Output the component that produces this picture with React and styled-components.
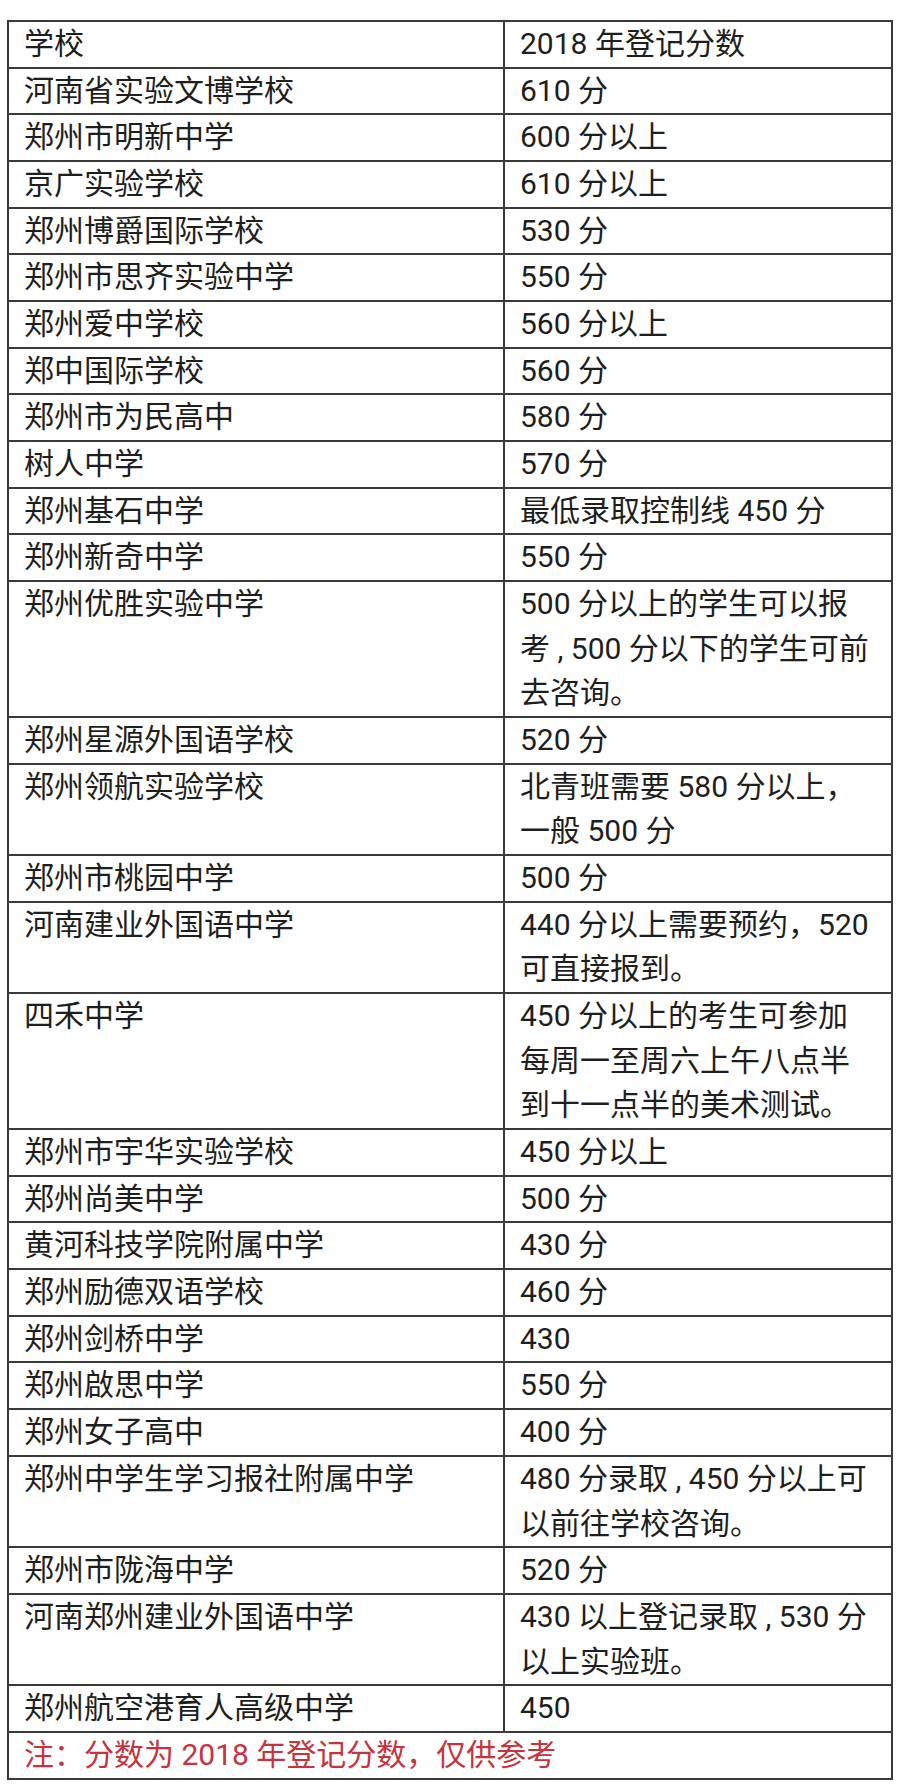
import React from 'react';
import styled, { createGlobalStyle } from 'styled-components';

const GlobalStyle = createGlobalStyle`
  body {
    margin: 0;
    background: #fff;
  }
`;

const rows = [
  ['河南省实验文博学校', ['610 分']],
  ['郑州市明新中学', ['600 分以上']],
  ['京广实验学校', ['610 分以上']],
  ['郑州博爵国际学校', ['530 分']],
  ['郑州市思齐实验中学', ['550 分']],
  ['郑州爱中学校', ['560 分以上']],
  ['郑中国际学校', ['560 分']],
  ['郑州市为民高中', ['580 分']],
  ['树人中学', ['570 分']],
  ['郑州基石中学', ['最低录取控制线 450 分']],
  ['郑州新奇中学', ['550 分']],
  ['郑州优胜实验中学', ['500 分以上的学生可以报', '考 , 500 分以下的学生可前', '去咨询。']],
  ['郑州星源外国语学校', ['520 分']],
  ['郑州领航实验学校', ['北青班需要 580 分以上，', '一般 500 分']],
  ['郑州市桃园中学', ['500 分']],
  ['河南建业外国语中学', ['440 分以上需要预约，520', '可直接报到。']],
  ['四禾中学', ['450 分以上的考生可参加', '每周一至周六上午八点半', '到十一点半的美术测试。']],
  ['郑州市宇华实验学校', ['450 分以上']],
  ['郑州尚美中学', ['500 分']],
  ['黄河科技学院附属中学', ['430 分']],
  ['郑州励德双语学校', ['460 分']],
  ['郑州剑桥中学', ['430']],
  ['郑州啟思中学', ['550 分']],
  ['郑州女子高中', ['400 分']],
  ['郑州中学生学习报社附属中学', ['480 分录取 , 450 分以上可', '以前往学校咨询。']],
  ['郑州市陇海中学', ['520 分']],
  ['河南郑州建业外国语中学', ['430 以上登记录取 , 530 分', '以上实验班。']],
  ['郑州航空港育人高级中学', ['450']],
];

const Table = styled.div`
  box-sizing: border-box;
  width: 886px;
  margin: 20px 0 8px 7px;
  border: 2px solid #3a3a3a;
  border-bottom: none;
  font-family: Roboto, "Noto Sans CJK SC", sans-serif;
  font-size: 30px;
  color: #1e1e1e;
`;

const Row = styled.div`
  display: grid;
  grid-template-columns: 496px 1fr;
  border-bottom: 2px solid #3a3a3a;
`;

const Cell = styled.div`
  padding: 0 10px 0 15px;
  line-height: 44.67px;
  white-space: nowrap;
  border-right: ${(p) => (p.$first ? '2px solid #3a3a3a' : 'none')};
`;

const Line = styled.div``;

const Note = styled.div`
  padding: 0 15px;
  line-height: 44.67px;
  color: #c8323c;
  border-bottom: 2px solid #3a3a3a;
`;

const App = () => (
  <>
    <GlobalStyle />
    <Table>
      <Row>
        <Cell $first>学校</Cell>
        <Cell>2018 年登记分数</Cell>
      </Row>
      {rows.map(([school, lines]) => (
        <Row key={school}>
          <Cell $first>{school}</Cell>
          <Cell>
            {lines.map((l) => (
              <Line key={l}>{l}</Line>
            ))}
          </Cell>
        </Row>
      ))}
      <Note>注：分数为 2018 年登记分数，仅供参考</Note>
    </Table>
  </>
);

export default App;
